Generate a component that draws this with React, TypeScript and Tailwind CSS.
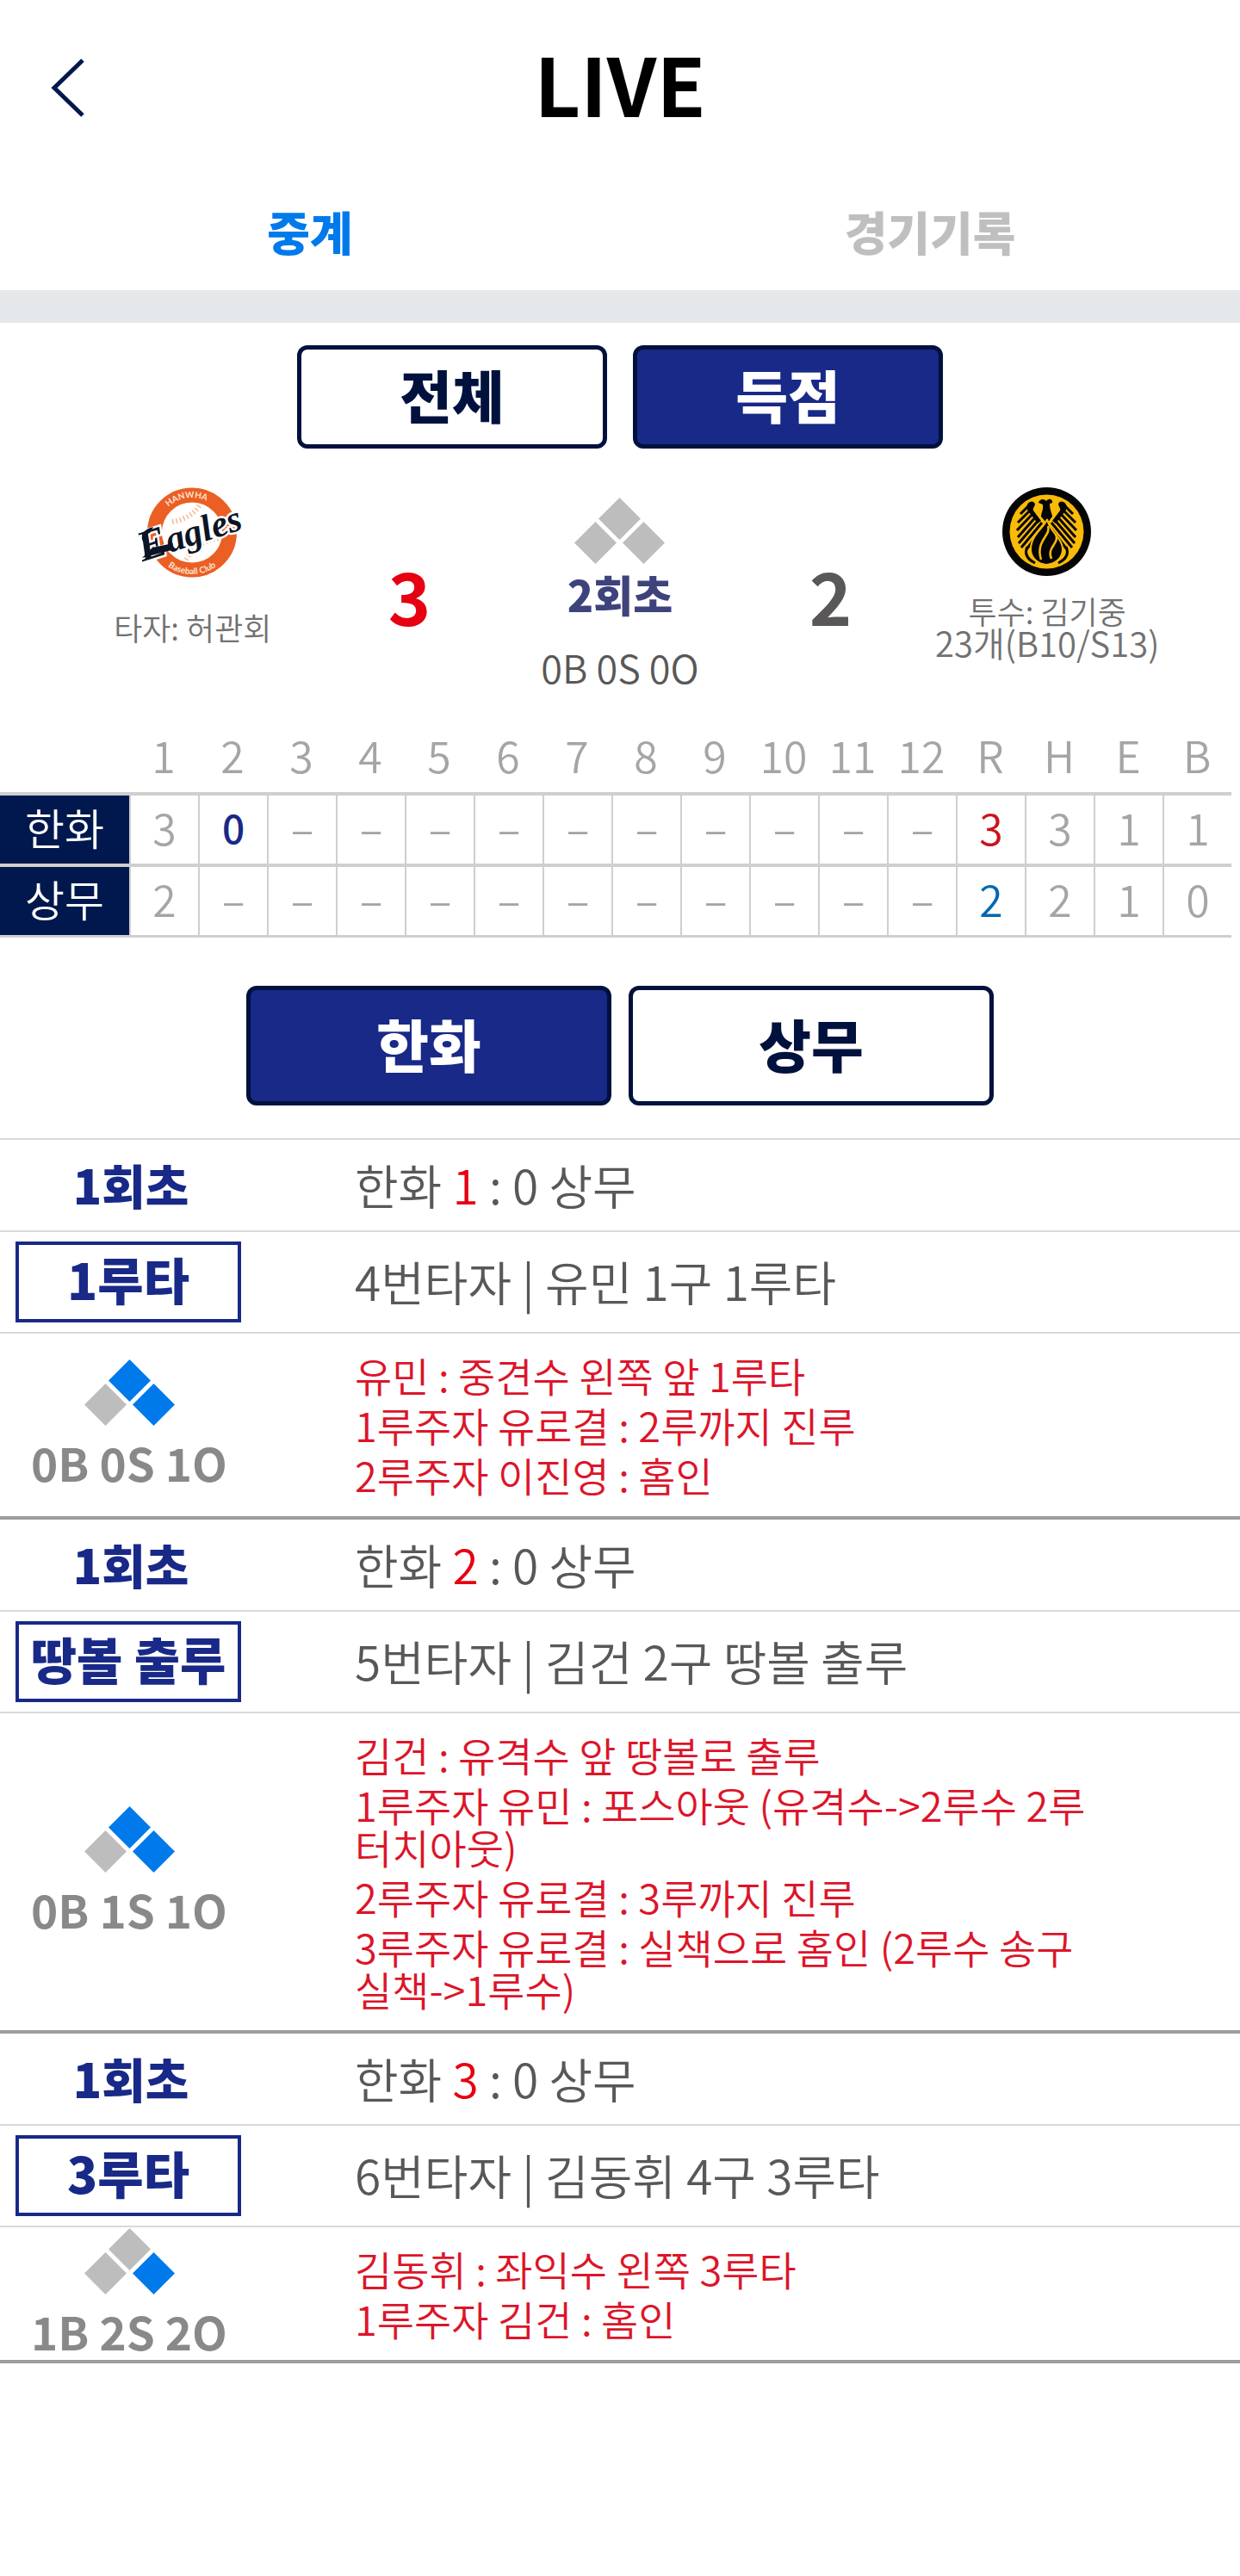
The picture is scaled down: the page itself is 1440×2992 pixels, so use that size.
import { useState } from "react"

const innings = ["1", "2", "3", "4", "5", "6", "7", "8", "9", "10", "11", "12", "R", "H", "E", "B"]

const teams = [
  { name: "한화", scores: ["3", "0", "–", "–", "–", "–", "–", "–", "–", "–", "–", "–", "3", "3", "1", "1"] },
  { name: "상무", scores: ["2", "–", "–", "–", "–", "–", "–", "–", "–", "–", "–", "–", "2", "2", "1", "0"] },
]

const plays = [
  {
    inning: "1회초",
    score: "1",
    result: "1루타",
    batter: "4번타자 | 유민 1구 1루타",
    bases: [true, true, false],
    count: "0B 0S 1O",
    lines: ["유민 : 중견수 왼쪽 앞 1루타", "1루주자 유로결 : 2루까지 진루", "2루주자 이진영 : 홈인"],
  },
  {
    inning: "1회초",
    score: "2",
    result: "땅볼 출루",
    batter: "5번타자 | 김건 2구 땅볼 출루",
    bases: [true, true, false],
    count: "0B 1S 1O",
    lines: [
      "김건 : 유격수 앞 땅볼로 출루",
      "1루주자 유민 : 포스아웃 (유격수->2루수 2루 터치아웃)",
      "2루주자 유로결 : 3루까지 진루",
      "3루주자 유로결 : 실책으로 홈인 (2루수 송구 실책->1루수)",
    ],
  },
  {
    inning: "1회초",
    score: "3",
    result: "3루타",
    batter: "6번타자 | 김동휘 4구 3루타",
    bases: [true, false, false],
    count: "1B 2S 2O",
    lines: ["김동휘 : 좌익수 왼쪽 3루타", "1루주자 김건 : 홈인"],
  },
]

// bases = [1st, 2nd, 3rd]
function Bases({ bases }: { bases: boolean[] }) {
  const color = (on: boolean) => (on ? "#007aeb" : "#bdbdbd")

  return (
    <svg width="105" height="77" viewBox="0 0 105 77">
      <path d="M52.500 0L77 24.500 52.500 49 28 24.500z" fill={color(bases[1])} />
      <path d="M24.500 28L49 52.500 24.500 77 0 52.500z" fill={color(bases[2])} />
      <path d="M80.500 28L105 52.500 80.500 77 56 52.500z" fill={color(bases[0])} />
    </svg>
  )
}

function EaglesLogo() {
  return (
    <svg width="140" height="125" viewBox="0 0 140 125" role="img" aria-label="Hanwha Eagles" className="overflow-visible">
      <defs>
        <path id="arc-top" d="M28 64a41 41 0 0 1 82 0" />
        <path id="arc-bottom" d="M21 64a48 48 0 0 0 96 0" />
      </defs>
      <circle cx="69" cy="63.500" r="43.500" fill="#fff" stroke="#eb5f24" strokeWidth="17" />
      <path d="M46 51c14-2 26-9 33-21M62 95c7-13 20-22 38-25" fill="none" stroke="#f6b78f" strokeWidth="6" strokeDasharray="1.500 3" />
      <g fill="#fde3d3" fontSize="10" fontFamily="Lato" fontWeight="700" textAnchor="middle">
        <text>
          <textPath href="#arc-top" startOffset="45%">HANWHA</textPath>
        </text>
        <text>
          <textPath href="#arc-bottom" startOffset="50%">Baseball Club</textPath>
        </text>
      </g>
      <text
        x="66"
        y="78"
        transform="rotate(-18 69 64)"
        textAnchor="middle"
        fontFamily="Liberation Serif"
        fontStyle="italic"
        fontWeight="700"
        fontSize="43"
        fill="#0b1526"
        stroke="#fff"
        strokeWidth="5"
        paintOrder="stroke"
      >
        <tspan fontSize="50">E</tspan>agles
      </text>
      <path d="M11 93l12-12 24-5-2 8z" fill="#0b1526" />
      <path d="M12 74c-4-8 2-15 12-17l-4 7c-4 1-5 5-8 10z" fill="#0b1526" />
    </svg>
  )
}

function SangmuLogo() {
  return (
    <svg width="120" height="125" viewBox="0 -2 120 125" role="img" aria-label="상무">
      <circle cx="59.500" cy="60.500" r="51.500" fill="#050505" />
      <circle cx="59.500" cy="60.500" r="43" fill="#f9ba08" />
      <g fill="none" stroke="#050505" strokeWidth="3">
        <path d="M48 42L26 67M51 46L27 74M54 50L30 79M57 54L36 81M45 38L25 59M42 34L26 50M40 29L29 40" />
        <path d="M71 42l22 25M68 46l24 28M65 50l24 29M62 54l21 27M74 38l20 21M77 34l16 16M79 29l11 11" />
      </g>
      <path d="M37 29c2-4 8-5 9 0-1 3-3 5-2 7l9 12-4 3-10-13c-3-3-3-6-2-9zM82 29c-2-4-8-5-9 0 1 3 3 5 2 7L66 48l4 3 10-13c3-3 3-6 2-9z" fill="#050505" />
      <path d="M50 27c1-5 7-5 9-2 3-4 8-2 7 2l-3 1c0 7 3 12 3 15l-6 8-7-8c0-4 3-8 2-14z" fill="#050505" />
      <path d="M60 46c-3 10-19 18-19 35 0 9 7 17 18 18 12-1 19-9 19-18 0-13-15-20-18-35z" fill="#050505" stroke="#f9ba08" strokeWidth="2" />
      <path d="M61 54c4 11-15 17-8 39M70 63c5 12-11 15-5 29" fill="none" stroke="#f9ba08" strokeWidth="2.500" />
      <path d="M37 78c-4 9 1 15 9 19M82 78c4 9-1 15-9 19" fill="none" stroke="#050505" strokeWidth="3" />
    </svg>
  )
}

function scoreColor(team: number, index: number) {
  if (team === 0 && index === 1) return "font-medium text-[46px] text-[#182987]"
  if (index === 12) return team === 0 ? "text-[#c9151e]" : "text-[#0068b1]"
  return "text-[#a5a5a5]"
}

export default function App() {
  const [filter, setFilter] = useState("득점")
  const [team, setTeam] = useState("한화")

  const active = "bg-[#182987] text-white"
  const idle = "bg-white text-[#00113d]"

  return (
    <div className="bg-white break-keep font-[350] text-[#595757] font-['Noto_Sans_CJK_KR',sans-serif]">
      <header className="grid h-[204px] grid-cols-[1fr_auto_1fr] items-center px-[58px]">
        <button aria-label="뒤로" className="w-fit">
          <svg width="40" height="68" viewBox="0 0 40 68" fill="none" stroke="#00184d" strokeWidth="5">
            <path d="M38 2L5 34l33 32" />
          </svg>
        </button>
        <h1 className="pb-3 text-[93px] leading-[96px] font-bold text-black">LIVE</h1>
      </header>

      <nav className="grid h-[133px] grid-cols-2 items-center pb-1 text-center text-[54px] font-black">
        <a href="#live" className="text-[#007aeb]">중계</a>
        <a href="#record" className="text-[#bfbfbf]">경기기록</a>
      </nav>

      <div className="h-[38px] bg-[#e4e8eb]" />

      <div className="flex justify-center gap-[30px] pt-[26px]">
        {["전체", "득점"].map((name) => (
          <button
            key={name}
            onClick={() => setFilter(name)}
            className={`h-[120px] w-1/4 rounded-xl border-5 border-[#00113d] pb-2 text-[66px] leading-[100px] font-black ${
              filter === name ? active : idle
            }`}
          >
            {name}
          </button>
        ))}
      </div>

      <section className="grid grid-cols-[25fr_10fr_24fr_10fr_25fr] px-11 pt-[34px] text-center">
        <div className="flex flex-col items-center">
          <EaglesLogo />
          <p className="mt-2 flex h-20 items-center text-[36px] leading-[37px] text-[#727171]">타자: 허관회</p>
        </div>
        <strong className="mt-[94px] text-[84px] leading-[84px] font-bold text-[#e60012]">3</strong>
        <div className="flex flex-col items-center pt-[23px]">
          <Bases bases={[false, false, false]} />
          <p className="h-24 text-[50px] leading-[68px] font-black text-[#3e437c]">2회초</p>
          <p className="text-[45px] leading-[48px]">0B 0S 0O</p>
        </div>
        <strong className="mt-[94px] text-[84px] leading-[84px] font-bold">2</strong>
        <div className="flex flex-col items-center">
          <SangmuLogo />
          <div className="mt-2 flex h-20 flex-col justify-center text-[#727171]">
            <p className="text-[36px] leading-[37px]">투수: 김기중</p>
            <p className="text-[40px] leading-[37px]">23개(B10/S13)</p>
          </div>
        </div>
      </section>

      <div className="pt-[41px] pr-[10px]">
        <table className="w-full table-fixed border-separate border-spacing-0 border-b-3 border-[#cfcfcf] text-center text-[50px] leading-[50px]">
          <thead>
            <tr className="h-20 text-[#a5a5a5]">
              <th className="w-[150px]" />
              {innings.map((inning) => (
                <th key={inning} className="p-0 pb-2 font-[350]">{inning}</th>
              ))}
            </tr>
          </thead>
          <tbody>
            {teams.map((row, t) => (
              <tr key={row.name} className="h-[83px]">
                <th className="border-t-4 border-[#cfcfcf] bg-[#00184d] p-0 pb-2 font-[350] text-white">{row.name}</th>
                {row.scores.map((score, i) => (
                  <td key={i} className={`border-t-4 border-l-2 border-[#cfcfcf] p-0 pb-2 ${scoreColor(t, i)}`}>
                    {score}
                  </td>
                ))}
              </tr>
            ))}
          </tbody>
        </table>
      </div>

      <div className="flex justify-center gap-5 px-[286px] pt-14 pb-[38px]">
        {teams.map(({ name }) => (
          <button
            key={name}
            onClick={() => setTeam(name)}
            className={`h-[139px] flex-1 rounded-xl border-5 border-[#00113d] pb-2 text-[66px] leading-[100px] font-black ${
              team === name ? active : idle
            }`}
          >
            {name}
          </button>
        ))}
      </div>

      <main>
        {plays.map((play, i) => (
          <article key={i} className={i === 0 ? "border-t-2 border-[#d9d9d9]" : "border-t-4 border-[#9d9da1]"}>
            <div className="flex h-[105px] items-center pb-1 text-[55px] leading-[60px]">
              <h2 className="w-[300px] shrink-0 pl-1 text-center font-black text-[#182987]">{play.inning}</h2>
              <p className="pl-28">
                한화 <span className="text-[#e60012]">{play.score}</span> : 0 상무
              </p>
            </div>
            <div className="flex items-center border-y-2 border-[#d9d9d9] py-[11px] text-[55px] leading-[60px]">
              <div className="w-[300px] shrink-0 pr-5 pl-[18px]">
                <p className="border-4 border-[#182987] pt-[9px] pb-[17px] text-center text-[58px] font-black whitespace-nowrap text-[#182987]">
                  {play.result}
                </p>
              </div>
              <p className="pb-1 pl-28">{play.batter}</p>
            </div>
            <div className="flex items-center">
              <div className="flex w-[300px] shrink-0 flex-col items-center pt-px">
                <Bases bases={play.bases} />
                <p className="h-19 text-[53px] leading-[84px] font-bold text-[#898989]">{play.count}</p>
              </div>
              <div className="flex flex-col gap-[9px] pt-[23px] pr-[110px] pb-6 pl-28 text-[47px] leading-[49px] text-[#dc152a]">
                {play.lines.map((line) => (
                  <p key={line}>{line}</p>
                ))}
              </div>
            </div>
          </article>
        ))}
        <div className="h-1 bg-[#9d9da1]" />
      </main>
    </div>
  )
}
